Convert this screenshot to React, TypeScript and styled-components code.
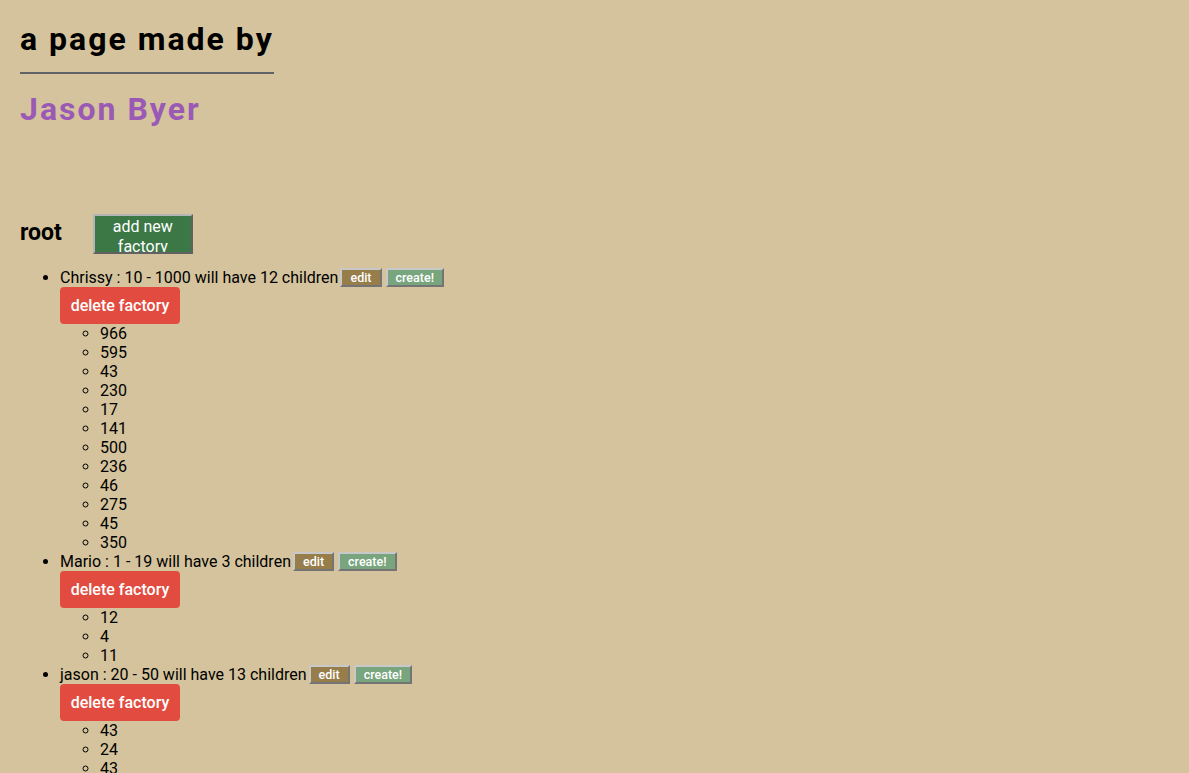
import React from "react";
import styled, { createGlobalStyle } from "styled-components";

const Global = createGlobalStyle`
  html, body { background: #d4c39c; }
  body { margin: 0; padding: 20px; font-family: Roboto, "Liberation Sans", sans-serif; color: #000; }
`;

const Header = styled.header`
  display: flex;
  flex-direction: column;
  align-items: flex-start;
`;

const Title = styled.h1`
  margin: 0;
  font-size: 32px;
  font-weight: 700;
  letter-spacing: 2px;
  padding-bottom: 14px;
  border-bottom: 2px solid #5f6368;
  line-height: 38px;
`;

const Author = styled.h2`
  margin: 16px 0 0;
  font-size: 32px;
  font-weight: 700;
  letter-spacing: 2px;
  color: #9b59b6;
  line-height: 38px;
`;

const RootRow = styled.div`
  display: flex;
  align-items: center;
  gap: 31px;
  margin-top: 86px;
`;

const RootLabel = styled.h3`
  margin: 0 0 4px;
  font-size: 23px;
  font-weight: 700;
`;

const AddButton = styled.button`
  width: 100px;
  height: 40px;
  background: #3b7845;
  color: #fff;
  font-family: Roboto, sans-serif;
  font-size: 16px;
  font-weight: 400;
  line-height: 20px;
  border: 2px outset #b5b5b5;
  padding: 1px 4px 0;
  overflow: hidden;
`;

const FactoryList = styled.ul`
  margin: 14px 0 0;
  padding-left: 40px;
  list-style: disc;
  font-size: 16px;
  line-height: 19px;
`;

const FactoryLine = styled.div`
  display: flex;
  align-items: center;
  height: 19px;
  gap: 2px;
`;

const ChildList = styled.ul`
  margin: 0;
  padding-left: 40px;
  list-style: circle;
`;

const SmallButton = styled.button<{ $bg: string }>`
  background: ${(p) => p.$bg};
  color: #fff;
  font-family: Roboto, sans-serif;
  font-size: 12.5px;
  font-weight: 500;
  height: 19px;
  line-height: 15px;
  padding: 0 8px;
  border: 2px outset #c8c8c8;

  & + & {
    margin-left: 2px;
  }
`;

const DeleteButton = styled.button`
  display: block;
  background: #e24c40;
  color: #fff;
  font-family: Roboto, sans-serif;
  font-size: 16px;
  font-weight: 500;
  border: none;
  border-radius: 4px;
  height: 37px;
  width: 120px;
  padding: 0;
`;

const factories = [
  { name: "Chrissy", min: 10, max: 1000, children: [966, 595, 43, 230, 17, 141, 500, 236, 46, 275, 45, 350] },
  { name: "Mario", min: 1, max: 19, children: [12, 4, 11] },
  { name: "jason", min: 20, max: 50, children: [43, 24, 43, 30, 22, 40, 31, 26, 48, 21, 33, 29, 45] },
];

export default function App() {
  return (
    <>
      <Global />
      <Header>
        <Title>a page made by</Title>
        <Author>Jason Byer</Author>
      </Header>
      <RootRow>
        <RootLabel>root</RootLabel>
        <AddButton>add new factory</AddButton>
      </RootRow>
      <FactoryList>
        {factories.map((f) => (
          <li key={f.name}>
            <FactoryLine>
              <span>
                {f.name} : {f.min} - {f.max} will have {f.children.length} children
              </span>
              <SmallButton $bg="#967d4a">edit</SmallButton>
              <SmallButton $bg="#78a47e">create!</SmallButton>
            </FactoryLine>
            <DeleteButton>delete factory</DeleteButton>
            <ChildList>
              {f.children.map((c, i) => (
                <li key={i}>{c}</li>
              ))}
            </ChildList>
          </li>
        ))}
      </FactoryList>
    </>
  );
}
